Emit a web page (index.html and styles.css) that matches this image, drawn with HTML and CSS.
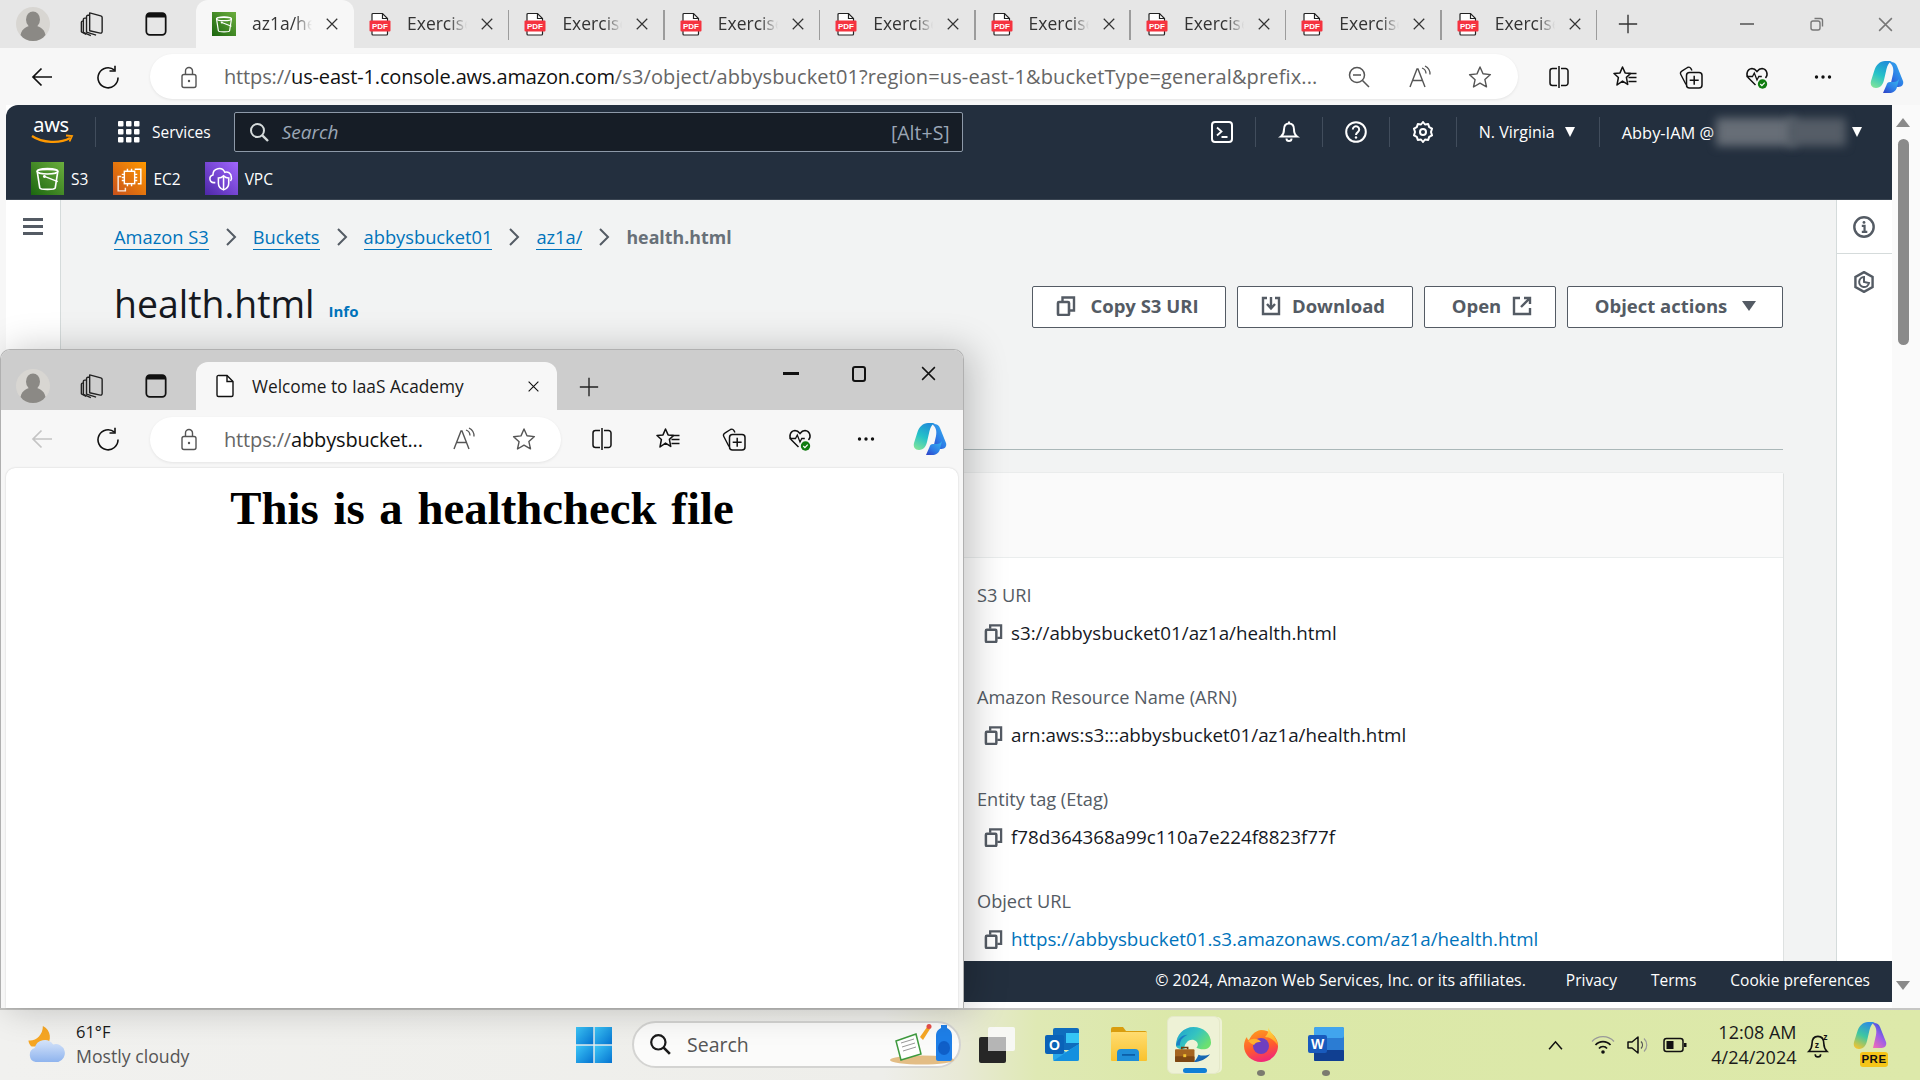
FILE: index.html
```html
<!DOCTYPE html>
<html lang="en">
<head>
<meta charset="utf-8">
<title>health.html</title>
<link rel="stylesheet" href="styles.css">
</head>
<body>
<svg class="defs" width="0" height="0" aria-hidden="true">
  <defs>
    <linearGradient id="gS3" x1="1" y1="0" x2="0" y2="1"><stop offset="0" stop-color="#6cae3e"/><stop offset="1" stop-color="#1b660f"/></linearGradient>
    <linearGradient id="gEc2" x1="1" y1="0" x2="0" y2="1"><stop offset="0" stop-color="#f90"/><stop offset="1" stop-color="#c8511b"/></linearGradient>
    <linearGradient id="gVpc" x1="1" y1="0" x2="0" y2="1"><stop offset="0" stop-color="#a166ff"/><stop offset="1" stop-color="#4d27a8"/></linearGradient>
    <linearGradient id="gCoA" x1="0.6" y1="0" x2="0.2" y2="1"><stop offset="0" stop-color="#1f8fd8"/><stop offset=".5" stop-color="#25c2c8"/><stop offset="1" stop-color="#7fe39a"/></linearGradient>
    <linearGradient id="gCoB" x1="0.9" y1="0" x2="0.1" y2="1"><stop offset="0" stop-color="#34b6ee"/><stop offset=".6" stop-color="#2d7be6"/><stop offset="1" stop-color="#2f45c8"/></linearGradient>
    <linearGradient id="gCoC" x1="0.6" y1="0" x2="0.2" y2="1"><stop offset="0" stop-color="#2c8fe0"/><stop offset=".5" stop-color="#3fc8a0"/><stop offset="1" stop-color="#f4c430"/></linearGradient>
    <linearGradient id="gCoD" x1="0.8" y1="0" x2="0.2" y2="1"><stop offset="0" stop-color="#1a55d8"/><stop offset=".5" stop-color="#9a5de8"/><stop offset="1" stop-color="#ee6cb8"/></linearGradient>
    <linearGradient id="gEdge" x1="0" y1="0" x2="1" y2=".6"><stop offset="0" stop-color="#1e9fd0"/><stop offset=".55" stop-color="#35c4c0"/><stop offset="1" stop-color="#6ce070"/></linearGradient>
    <linearGradient id="gEdgeB" x1="0" y1="0" x2="1" y2="1"><stop offset="0" stop-color="#1f7fc8"/><stop offset="1" stop-color="#0c4f9c"/></linearGradient>
    <linearGradient id="gFox" x1=".3" y1="0" x2=".6" y2="1"><stop offset="0" stop-color="#ff9a1f"/><stop offset=".55" stop-color="#ff5a2e"/><stop offset="1" stop-color="#f0247f"/></linearGradient>
    <linearGradient id="gFoxT" x1="0" y1="0" x2="0" y2="1"><stop offset="0" stop-color="#ffe04a"/><stop offset="1" stop-color="#ff9a1f"/></linearGradient>
    <linearGradient id="gWin" x1="0" y1="0" x2="1" y2="1"><stop offset="0" stop-color="#3cc6f7"/><stop offset="1" stop-color="#0573d0"/></linearGradient>
    <linearGradient id="gCloud" x1="0" y1="0" x2="0" y2="1"><stop offset="0" stop-color="#d6e4fa"/><stop offset="1" stop-color="#8fb4ee"/></linearGradient>
    <linearGradient id="gFold" x1="0" y1="0" x2="0" y2="1"><stop offset="0" stop-color="#ffdc70"/><stop offset="1" stop-color="#f9c22e"/></linearGradient>

    <symbol id="i-avatar" viewBox="0 0 34 34"><circle cx="17" cy="17" r="17" fill="#d8d6d2"/><ellipse cx="17" cy="12.500" rx="7" ry="8" fill="#8b8985"/><path d="M4.500 28c1.500-7 7-9.500 12.500-9.500S28 21 29.500 28c-3 4-7.500 6-12.500 6S7.500 32 4.500 28z" fill="#8b8985"/></symbol>
    <symbol id="i-spaces" viewBox="0 0 24 24"><g fill="none" stroke="#222" stroke-width="1.200" stroke-linejoin="round"><path d="M10 2.500l9.500 2.500c.8.200 1.200.8 1.200 1.500v12c0 1-.8 1.500-1.700 1.300L10 17.800V2.500z"/><path d="M10 4.500H8.500c-.8 0-1.200.5-1.200 1.200v13.300L15.500 21.500"/><path d="M7.300 7H5.800c-.8 0-1.200.5-1.200 1.200v11L11 22"/><path d="M4.600 9.500H3.800c-.6 0-.9.400-.9 1v8.200L7 21"/></g></symbol>
    <symbol id="i-vtabs" viewBox="0 0 24 24"><rect x="3.700" y="2.700" width="16.600" height="18.600" rx="3" fill="none" stroke="#111" stroke-width="1.500"/><path d="M4 6.500V5a2.500 2.500 0 0 1 2.500-2.500h11A2.500 2.500 0 0 1 20 5v1.500z" fill="#111"/></symbol>
    <symbol id="i-x" viewBox="0 0 16 16"><path d="M2 2l12 12M14 2L2 14" fill="none" stroke="currentColor" stroke-width="1.400"/></symbol>
    <symbol id="i-plus" viewBox="0 0 24 24"><path d="M12 2v20M2 12h20" fill="none" stroke="currentColor" stroke-width="1.500"/></symbol>
    <symbol id="i-pdf" viewBox="0 0 24 24"><path d="M5 1.500h9.500l5 5V22a1 1 0 0 1-1 1H5a1 1 0 0 1-1-1V2.500a1 1 0 0 1 1-1z" fill="#fff" stroke="#222" stroke-width="1.200"/><path d="M14.500 1.500V6.500h5" fill="none" stroke="#222" stroke-width="1.200"/><rect x="1.500" y="8.500" width="21" height="11" rx="1" fill="#f5333f"/><text x="12" y="17" font-family="Liberation Sans,sans-serif" font-size="8" font-weight="700" fill="#fff" text-anchor="middle">PDF</text></symbol>
    <symbol id="i-doc" viewBox="0 0 24 24"><path d="M6 1.500h8l6 6V21a1.500 1.500 0 0 1-1.500 1.500h-13A1.500 1.500 0 0 1 4 21V3a1.500 1.500 0 0 1 2-1.500z" fill="#fff" stroke="#111" stroke-width="1.400"/><path d="M14 1.500V7.500h6" fill="none" stroke="#111" stroke-width="1.400"/></symbol>
    <symbol id="i-bucket" viewBox="0 0 32 32"><path d="M6 9c0-2.500 20-2.500 20 0l-2.500 16c-.3 2-14.700 2-15 0z" fill="none" stroke="#fff" stroke-width="1.600"/><ellipse cx="16" cy="9" rx="10" ry="2.600" fill="none" stroke="#fff" stroke-width="1.600"/><path d="M13 14l13 5" stroke="#fff" stroke-width="1.400" fill="none"/><circle cx="13" cy="14" r="1.400" fill="#fff"/></symbol>
    <symbol id="i-s3" viewBox="0 0 32 32"><rect width="32" height="32" fill="url(#gS3)"/><use href="#i-bucket"/></symbol>
    <symbol id="i-ec2" viewBox="0 0 32 32"><rect width="32" height="32" fill="url(#gEc2)"/><g fill="none" stroke="#fff" stroke-width="1.400"><path d="M21 7h6v14h-3"/><path d="M12 25v3H5V14h3" opacity=".85"/><rect x="11" y="9" width="10" height="12"/><path d="M14 6.500V9M18 6.500V9M14 21v2.500M18 21v2.500M8.500 12H11M8.500 15H11M8.500 18H11M21 12h2.500M21 15h2.500M21 18h2.500"/></g></symbol>
    <symbol id="i-vpc" viewBox="0 0 32 32"><rect width="32" height="32" fill="url(#gVpc)"/><g fill="none" stroke="#fff" stroke-width="1.500"><path d="M10 20H8.500a3.800 3.800 0 0 1-.8-7.500 6 6 0 0 1 11.500-2.500 4.800 4.800 0 0 1 6.300 4.500 4 4 0 0 1-.8 4"/><path d="M13 15.500c2 0 4-1 5-2 1 1 3 2 5 2v5c0 3-2.500 5.500-5 6.500-2.500-1-5-3.500-5-6.500z"/><path d="M18 13.500v13"/></g></symbol>
    <symbol id="i-back" viewBox="0 0 24 24"><path d="M22 12H3M11.500 3.500L3 12l8.500 8.500" fill="none" stroke="currentColor" stroke-width="1.700"/></symbol>
    <symbol id="i-reload" viewBox="0 0 24 24"><path d="M18.500 5.200A10 10 0 1 0 22 12.500" fill="none" stroke="currentColor" stroke-width="1.600"/><path d="M19 .8v5.200h-5.500" fill="none" stroke="currentColor" stroke-width="1.600"/></symbol>
    <symbol id="i-lock" viewBox="0 0 24 24"><rect x="5" y="9.500" width="14" height="13" rx="2" fill="none" stroke="#555" stroke-width="1.400"/><path d="M8.500 9.500V6a3.500 3.500 0 0 1 7 0v3.500" fill="none" stroke="#555" stroke-width="1.400"/><circle cx="12" cy="16" r="1.200" fill="#555"/></symbol>
    <symbol id="i-zoomout" viewBox="0 0 24 24"><circle cx="10" cy="10" r="7.500" fill="none" stroke="#555" stroke-width="1.500"/><path d="M15.500 15.500L22 22M6 10h8" fill="none" stroke="#555" stroke-width="1.500"/></symbol>
    <symbol id="i-read" viewBox="0 0 24 24"><path d="M2 22L9 4h1l7 18M5 15.500h9.500" fill="none" stroke="#555" stroke-width="1.400"/><path d="M14 3a6 6 0 0 1 4 5.500M17 1a9 9 0 0 1 5 8.500" fill="none" stroke="#555" stroke-width="1.300"/></symbol>
    <symbol id="i-star" viewBox="0 0 24 24"><path d="M12 2l3 6.800 7.400.8-5.500 5 1.600 7.300L12 18.200 5.500 22l1.600-7.300-5.500-5 7.400-.8z" fill="none" stroke="#555" stroke-width="1.400" stroke-linejoin="round"/></symbol>
    <symbol id="i-split" viewBox="0 0 24 24"><path d="M10 3.500H5.500A2.500 2.500 0 0 0 3 6v12a2.500 2.500 0 0 0 2.500 2.500H10M14 3.500h4.500A2.500 2.500 0 0 1 21 6v12a2.500 2.500 0 0 1-2.500 2.500H14" fill="none" stroke="#111" stroke-width="1.500"/><path d="M12 1v22" stroke="#111" stroke-width="1.500"/></symbol>
    <symbol id="i-fav" viewBox="0 0 24 24"><path d="M9.500 2l2.600 5.900 5.500.6-4.200 3.900 1.300 7-5.200-3.300L4 20l1.400-7.500L1 8.500l6-.6z" fill="none" stroke="#111" stroke-width="1.500" stroke-linejoin="round"/><path d="M15.500 8.500h8M15.500 12.500h8M15.500 16.500h8" stroke="#111" stroke-width="1.300"/></symbol>
    <symbol id="i-coll" viewBox="0 0 24 24"><path d="M7 19.500L1.800 9.500c-.6-1.200-.2-2.600 1-3.300L8.500 2.500c1.200-.6 2.600-.3 3.300.8l1.200 2.200" fill="none" stroke="#111" stroke-width="1.400" stroke-linejoin="round"/><rect x="7.500" y="7.500" width="15.500" height="15.500" rx="3" fill="#f7f7f7" stroke="#111" stroke-width="1.500"/><path d="M15.200 10.800v9M10.700 15.300h9" stroke="#111" stroke-width="1.500"/></symbol>
    <symbol id="i-heart" viewBox="0 0 24 24"><path d="M10.500 20L3.500 13C.5 10 2 4 7 3.500c2 0 3.500 1 5 3 1.500-2 3-3 5-3 5 .5 6.500 6.500 3.500 9.500" fill="none" stroke="#111" stroke-width="1.500"/><path d="M1.500 11.500h6l1.800-3.500 2.700 7 1.800-3.500h3" fill="none" stroke="#111" stroke-width="1.300"/><circle cx="17.500" cy="19" r="4.700" fill="#107c10"/><path d="M15.300 19l1.600 1.600 2.800-3" fill="none" stroke="#fff" stroke-width="1.200"/></symbol>
    <symbol id="i-dots" viewBox="0 0 24 24"><circle cx="5.500" cy="12" r="1.700" fill="#111"/><circle cx="12" cy="12" r="1.700" fill="#111"/><circle cx="18.500" cy="12" r="1.700" fill="#111"/></symbol>
    <symbol id="i-copilot" viewBox="0 0 36 36"><path d="M22 3c3 0 5 1.500 6 4l6 15c1 3-1 6-4.500 6H21l3-13c1-5 0-9-4-12z" fill="url(#gCoB)"/><path d="M16 2h7c-3 1-4.500 4-5.500 8l-2.500 11c-1 4-3 8-8 8-4 0-6-3-5-7l3.500-11C7 6 11 2 16 2z" fill="url(#gCoA)"/><path d="M14 34h6c4 0 7-2 8-6l2-8c-1 2-3 3-5 3h-4c-2 0-3 1-3.500 3z" fill="url(#gCoB)"/></symbol>
    <symbol id="i-aws" viewBox="0 0 44 30"><text x="21" y="15" font-family="Noto Sans,sans-serif" font-size="20" fill="#fff" text-anchor="middle" letter-spacing="-.4">aws</text><path d="M2 19c10 7 28 8 38 2" fill="none" stroke="#f90" stroke-width="2.200"/><path d="M36 18.500l6 .5-2.500 5.500" fill="none" stroke="#f90" stroke-width="1.800"/></symbol>
    <symbol id="i-grid" viewBox="0 0 22 22"><g fill="#fff"><rect x="0" y="0" width="5.500" height="5.500" rx="1"/><rect x="8" y="0" width="5.500" height="5.500" rx="1"/><rect x="16" y="0" width="5.500" height="5.500" rx="1"/><rect x="0" y="8" width="5.500" height="5.500" rx="1"/><rect x="8" y="8" width="5.500" height="5.500" rx="1"/><rect x="16" y="8" width="5.500" height="5.500" rx="1"/><rect x="0" y="16" width="5.500" height="5.500" rx="1"/><rect x="8" y="16" width="5.500" height="5.500" rx="1"/><rect x="16" y="16" width="5.500" height="5.500" rx="1"/></g></symbol>
    <symbol id="i-search" viewBox="0 0 20 20"><circle cx="8.500" cy="8.500" r="6.500" fill="none" stroke="currentColor" stroke-width="2"/><path d="M13.300 13.300L19 19" stroke="currentColor" stroke-width="2.400"/></symbol>
    <symbol id="i-term" viewBox="0 0 22 22"><rect x="1" y="1" width="20" height="20" rx="3" fill="none" stroke="#fff" stroke-width="2"/><path d="M6 6.500l4.500 4-4.500 4M10.500 16h6" fill="none" stroke="#fff" stroke-width="1.800"/></symbol>
    <symbol id="i-bell" viewBox="0 0 22 22"><path d="M11 2.500c-3.500 0-5 2.500-5 6 0 3-1 5.500-3 7h16c-2-1.500-3-4-3-7 0-3.500-1.500-6-5-6z" fill="none" stroke="#fff" stroke-width="2"/><path d="M11 .5v2M8.500 17.500a2.500 2.500 0 0 0 5 0" fill="none" stroke="#fff" stroke-width="2"/></symbol>
    <symbol id="i-help" viewBox="0 0 22 22"><circle cx="11" cy="11" r="9.800" fill="none" stroke="#fff" stroke-width="2"/><path d="M7.800 8.500a3.200 3.200 0 1 1 5 2.600c-1.200.8-1.800 1.300-1.800 2.900" fill="none" stroke="#fff" stroke-width="2"/><circle cx="11" cy="16.500" r="1.200" fill="#fff"/></symbol>
    <symbol id="i-gear" viewBox="0 0 22 22"><path d="M11 1l2 2.500 3.200-.4 1 3 2.800 1.500L19 11l1 3.400-2.800 1.500-1 3-3.200-.4L11 21l-2-2.500-3.200.4-1-3L2 14.400 3 11 2 7.600l2.800-1.500 1-3 3.200.4z" fill="none" stroke="#fff" stroke-width="2" stroke-linejoin="round"/><circle cx="11" cy="11" r="3" fill="none" stroke="#fff" stroke-width="2"/></symbol>
    <symbol id="i-copy" viewBox="0 0 20 20"><rect x="2" y="6" width="11" height="13" rx="1" fill="none" stroke="currentColor" stroke-width="2.600"/><path d="M6.500 5V1.500H18V14.500H14" fill="none" stroke="currentColor" stroke-width="2.400"/></symbol>
    <symbol id="i-down" viewBox="0 0 20 20"><path d="M6 2H2v16h16V2h-4" fill="none" stroke="currentColor" stroke-width="2.400"/><path d="M10 1v11M6 8l4 4.500L14 8" fill="none" stroke="currentColor" stroke-width="2.400"/></symbol>
    <symbol id="i-ext" viewBox="0 0 20 20"><path d="M8 2H2v16h16v-6" fill="none" stroke="currentColor" stroke-width="2.400"/><path d="M12 2h6v6M18 2L9 11" fill="none" stroke="currentColor" stroke-width="2.400"/></symbol>
    <symbol id="i-info" viewBox="0 0 20 20"><circle cx="10" cy="10" r="8.800" fill="none" stroke="#545b64" stroke-width="2.200"/><path d="M8 9h2.500v5M8 14.500h5" fill="none" stroke="#545b64" stroke-width="2"/><circle cx="10" cy="5.800" r="1.300" fill="#545b64"/></symbol>
    <symbol id="i-hex" viewBox="0 0 20 20"><path d="M10 1l7.800 4.500v9L10 19l-7.800-4.500v-9z" fill="none" stroke="#545b64" stroke-width="2.200"/><path d="M10 5.500A4.500 4.500 0 1 0 14.500 11L10 10z" fill="none" stroke="#545b64" stroke-width="1.800"/></symbol>
    <symbol id="i-edgebag" viewBox="0 0 38 38"><path d="M1 20C1 9 9 1 19 1c10 0 18 7 18 16 0 5-4 7-8 7-3 0-6-1-7-2 2-1 2-4 0-6-3-3-8-2-10 1-2 2-3 5-2 7-4 0-9-1-9-4z" fill="url(#gEdge)"/><path d="M19 37c7 0 13-3 17-8-3 1.500-8 2-12 .5-1 3-3 6-5 7.500z" fill="url(#gEdgeB)"/><path d="M1 20c1-6 6-11 12-11-6 3-8 6-8 11z" fill="#1a7fc4"/><rect x="0" y="24" width="20" height="13" rx="1" fill="#a5651f"/><rect x="0" y="31" width="20" height="6" rx="1" fill="#7d4713"/><path d="M7 24v-2h6v2" fill="none" stroke="#6d3d10" stroke-width="1.600"/><rect x="8.500" y="29" width="3" height="3" fill="#f4c430"/></symbol>
  </defs>
</svg>

<div class="desktop">
  <div class="main-window">
    <div class="tabstrip">
      <svg class="avatar"><use href="#i-avatar"/></svg>
      <svg class="ic ic-spaces"><use href="#i-spaces"/></svg>
      <svg class="ic ic-vtabs"><use href="#i-vtabs"/></svg>
      <div class="tab tab-active">
        <svg class="tab-ic"><use href="#i-s3"/></svg>
        <span class="tab-title">az1a/health</span>
        <svg class="tab-x"><use href="#i-x"/></svg>
      </div>
      <div class="tab"><svg class="tab-ic"><use href="#i-pdf"/></svg><span class="tab-title">Exercise</span><svg class="tab-x"><use href="#i-x"/></svg></div>
      <div class="tab"><svg class="tab-ic"><use href="#i-pdf"/></svg><span class="tab-title">Exercise</span><svg class="tab-x"><use href="#i-x"/></svg></div>
      <div class="tab"><svg class="tab-ic"><use href="#i-pdf"/></svg><span class="tab-title">Exercise</span><svg class="tab-x"><use href="#i-x"/></svg></div>
      <div class="tab"><svg class="tab-ic"><use href="#i-pdf"/></svg><span class="tab-title">Exercise</span><svg class="tab-x"><use href="#i-x"/></svg></div>
      <div class="tab"><svg class="tab-ic"><use href="#i-pdf"/></svg><span class="tab-title">Exercise</span><svg class="tab-x"><use href="#i-x"/></svg></div>
      <div class="tab"><svg class="tab-ic"><use href="#i-pdf"/></svg><span class="tab-title">Exercise</span><svg class="tab-x"><use href="#i-x"/></svg></div>
      <div class="tab"><svg class="tab-ic"><use href="#i-pdf"/></svg><span class="tab-title">Exercise</span><svg class="tab-x"><use href="#i-x"/></svg></div>
      <div class="tab"><svg class="tab-ic"><use href="#i-pdf"/></svg><span class="tab-title">Exercise</span><svg class="tab-x"><use href="#i-x"/></svg></div>
      <svg class="newtab"><use href="#i-plus"/></svg>
      <div class="winctl winctl-dim">
        <span class="min-bar"></span>
        <svg class="restore" viewBox="0 0 16 16"><rect x="2" y="5" width="9" height="9" rx="2" fill="none" stroke="currentColor" stroke-width="1.400"/><path d="M5.500 2.500h6a2 2 0 0 1 2 2v6" fill="none" stroke="currentColor" stroke-width="1.400"/></svg>
        <svg class="close"><use href="#i-x"/></svg>
      </div>
    </div>

    <div class="toolbar">
      <svg class="tool tool-back"><use href="#i-back"/></svg>
      <svg class="tool tool-reload"><use href="#i-reload"/></svg>
      <div class="urlpill urlpill-main">
        <svg class="url-lock"><use href="#i-lock"/></svg>
        <span class="url"><span class="url-dim">https://</span>us-east-1.console.aws.amazon.com<span class="url-dim url-tail">/s3/object/abbysbucket01?region=us-east-1&amp;bucketType=general&amp;prefix...</span></span>
        <svg class="url-ic url-zoom"><use href="#i-zoomout"/></svg>
        <svg class="url-ic url-read"><use href="#i-read"/></svg>
        <svg class="url-ic url-star"><use href="#i-star"/></svg>
      </div>
      <div class="tool-set">
        <svg class="tool"><use href="#i-split"/></svg>
        <svg class="tool"><use href="#i-fav"/></svg>
        <svg class="tool"><use href="#i-coll"/></svg>
        <svg class="tool"><use href="#i-heart"/></svg>
        <svg class="tool"><use href="#i-dots"/></svg>
        <svg class="copilot"><use href="#i-copilot"/></svg>
      </div>
    </div>

    <div class="viewport">
      <div class="view">
        <header class="aws-head">
          <div class="aws-row1">
            <svg class="aws-logo"><use href="#i-aws"/></svg>
            <span class="aws-sep aws-sep-logo"></span>
            <svg class="aws-grid"><use href="#i-grid"/></svg>
            <span class="aws-services">Services</span>
            <div class="aws-search">
              <svg class="aws-search-ic"><use href="#i-search"/></svg>
              <span class="aws-search-ph">Search</span>
              <span class="aws-search-key">[Alt+S]</span>
            </div>
            <svg class="aws-act aws-act-first"><use href="#i-term"/></svg>
            <span class="aws-sep"></span>
            <svg class="aws-act"><use href="#i-bell"/></svg>
            <span class="aws-sep"></span>
            <svg class="aws-act"><use href="#i-help"/></svg>
            <span class="aws-sep"></span>
            <svg class="aws-act"><use href="#i-gear"/></svg>
            <span class="aws-sep"></span>
            <span class="aws-region">N. Virginia</span><span class="caret caret-w"></span>
            <span class="aws-sep aws-sep-user"></span>
            <span class="aws-user">Abby-IAM @</span><span class="blurred"><i class="blur-a"></i><i class="blur-b"></i></span><span class="caret caret-w caret-user"></span>
          </div>
          <div class="aws-row2">
            <svg class="svc-ic"><use href="#i-s3"/></svg><span class="svc-name">S3</span>
            <svg class="svc-ic svc-ic-ec2"><use href="#i-ec2"/></svg><span class="svc-name">EC2</span>
            <svg class="svc-ic svc-ic-vpc"><use href="#i-vpc"/></svg><span class="svc-name">VPC</span>
          </div>
        </header>

        <div class="aws-body">
          <aside class="sidenav"><span class="burger"><i></i><i></i><i></i></span></aside>
          <main class="content">
            <nav class="crumbs">
              <a class="crumb">Amazon S3</a><svg class="chev" viewBox="0 0 12 20"><path d="M2 2l8 8-8 8" fill="none" stroke="#545b64" stroke-width="2"/></svg>
              <a class="crumb">Buckets</a><svg class="chev" viewBox="0 0 12 20"><path d="M2 2l8 8-8 8" fill="none" stroke="#545b64" stroke-width="2"/></svg>
              <a class="crumb">abbysbucket01</a><svg class="chev" viewBox="0 0 12 20"><path d="M2 2l8 8-8 8" fill="none" stroke="#545b64" stroke-width="2"/></svg>
              <a class="crumb">az1a/</a><svg class="chev" viewBox="0 0 12 20"><path d="M2 2l8 8-8 8" fill="none" stroke="#545b64" stroke-width="2"/></svg>
              <span class="crumb-cur">health.html</span>
            </nav>
            <div class="title-row">
              <h1 class="obj-title">health.html</h1>
              <a class="info-link">Info</a>
              <div class="btns">
                <button class="btn btn-copy"><svg class="btn-ic"><use href="#i-copy"/></svg>Copy S3 URI</button>
                <button class="btn btn-dl"><svg class="btn-ic"><use href="#i-down"/></svg>Download</button>
                <button class="btn btn-open">Open<svg class="btn-ic btn-ic-end"><use href="#i-ext"/></svg></button>
                <button class="btn btn-act">Object actions<span class="caret caret-g"></span></button>
              </div>
            </div>
            <div class="tabline"></div>
            <section class="panel">
              <div class="panel-head"></div>
              <div class="panel-body">
                <div class="field"><div class="f-label">S3 URI</div><div class="f-val"><svg class="f-ic"><use href="#i-copy"/></svg>s3://abbysbucket01/az1a/health.html</div></div>
                <div class="field"><div class="f-label">Amazon Resource Name (ARN)</div><div class="f-val"><svg class="f-ic"><use href="#i-copy"/></svg>arn:aws:s3:::abbysbucket01/az1a/health.html</div></div>
                <div class="field"><div class="f-label">Entity tag (Etag)</div><div class="f-val"><svg class="f-ic"><use href="#i-copy"/></svg>f78d364368a99c110a7e224f8823f77f</div></div>
                <div class="field"><div class="f-label">Object URL</div><div class="f-val"><svg class="f-ic"><use href="#i-copy"/></svg><a class="f-link">https://abbysbucket01.s3.amazonaws.com/az1a/health.html</a></div></div>
              </div>
            </section>
          </main>
          <aside class="rail">
            <div class="rail-top"><svg class="rail-ic"><use href="#i-info"/></svg></div>
            <div class="rail-bot"><svg class="rail-ic"><use href="#i-hex"/></svg></div>
          </aside>
        </div>

        <footer class="aws-foot">
          <span class="foot-copy">© 2024, Amazon Web Services, Inc. or its affiliates.</span>
          <span class="foot-link foot-privacy">Privacy</span>
          <span class="foot-link foot-terms">Terms</span>
          <span class="foot-link foot-cookie">Cookie preferences</span>
        </footer>
        <div class="view-end"></div>
      </div>
      <div class="scrollbar">
        <span class="sb-up"></span>
        <span class="sb-thumb"></span>
        <span class="sb-down"></span>
      </div>
    </div>
  </div>

  <div class="taskbar">
    <div class="weather">
      <svg class="wx-ic" viewBox="0 0 36 35"><path d="M14 0C22 4 23 14 17 20H3C1 18 0 16 0 14 7 15 14 9 14 0z" fill="#f6a623"/><path d="M7 35A7 7 0 0 1 6 21.500 10 10 0 0 1 24 18 8.500 8.500 0 0 1 29 35z" fill="url(#gCloud)"/></svg>
      <div class="wx-txt"><span class="wx-temp">61°F</span><span class="wx-desc">Mostly cloudy</span></div>
    </div>
    <div class="task-center">
      <svg class="start" viewBox="0 0 36 36"><rect x="0" y="0" width="17.300" height="17.300" fill="url(#gWin)"/><rect x="18.700" y="0" width="17.300" height="17.300" fill="url(#gWin)"/><rect x="0" y="18.700" width="17.300" height="17.300" fill="url(#gWin)"/><rect x="18.700" y="18.700" width="17.300" height="17.300" fill="url(#gWin)"/></svg>
      <div class="tsearch">
        <svg class="tsearch-ic"><use href="#i-search"/></svg>
        <span class="tsearch-txt">Search</span>
        <svg class="tsearch-art" viewBox="0 0 66 42"><ellipse cx="32" cy="37" rx="32" ry="4.500" fill="#e3bd85"/><path d="M6 18l20-7 5 20-20 6z" fill="#fff" stroke="#3f9a3f" stroke-width="1.500"/><path d="M11 20l13-4M12 24l13-4M13 28l13-4" stroke="#999" stroke-width="1"/><path d="M30 14l7-10 3 2-7 11z" fill="#f6a623"/><circle cx="39" cy="3.500" r="2.500" fill="#e8504a"/><path d="M46 36V13c0-5 3-7 5-8V2h6v3c2 1 5 3 5 8v23c0 1-1 2-2 2H48c-1 0-2-1-2-2z" fill="#1e7fe8"/><ellipse cx="54" cy="25" rx="6" ry="7" fill="#0f5fc8"/></svg>
      </div>
      <svg class="app app-snap" viewBox="0 0 36 36"><rect x="0" y="10" width="27" height="26" rx="2" fill="#262626"/><rect x="9" y="0" width="27" height="24" rx="2" fill="#fafafa" opacity=".9"/><rect x="9" y="10" width="18" height="14" fill="#b5b5b5"/></svg>
      <svg class="app app-outlook" viewBox="0 0 36 36"><rect x="8" y="1" width="26" height="22" rx="2" fill="#0f6cbd"/><rect x="21" y="6" width="13" height="10" fill="#35c4f5"/><path d="M8 17l13 8 13-8v15a2 2 0 0 1-2 2H10a2 2 0 0 1-2-2z" fill="#28a8ea"/><path d="M8 34l26-17v15a2 2 0 0 1-2 2z" fill="#1490df"/><rect x="0" y="8" width="19" height="19" rx="2" fill="#0a62b8"/><text x="9.500" y="23" font-family="Liberation Sans,sans-serif" font-size="14" font-weight="700" fill="#fff" text-anchor="middle">O</text></svg>
      <svg class="app app-files" viewBox="0 0 36 36"><path d="M0 2a2 2 0 0 1 2-2h10l3 4h19a2 2 0 0 1 2 2v6H0z" fill="#d99d0e"/><rect x="0" y="5" width="36" height="29" rx="1" fill="url(#gFold)"/><path d="M6 34V26a4 4 0 0 1 4-4h14a4 4 0 0 1 4 4v8z" fill="#1f8ed8"/><rect x="11" y="27" width="13" height="1.800" fill="#0c5fa8"/></svg>
      <div class="app-edge"><svg class="app-edge-ic"><use href="#i-edgebag"/></svg><span class="app-bar"></span></div>
      <div class="app-wrap app-fox"><svg class="app" viewBox="0 0 36 36"><path d="M18 3c9 0 17 7 17 16s-8 16-17 16S1 28 1 19c0-3 1-7 3-9 0 2 1 3 2 3 2-4 5-9 12-10z" fill="url(#gFox)"/><path d="M25 0c1 5 9 9 10 19-3-6-9-9-13-9 3-3 4-6 3-10z" fill="url(#gFoxT)"/><circle cx="18" cy="19" r="8" fill="#6f3fc0"/><path d="M5 14c4-3 10-3 13 1-3-.5-6 .5-7 3-2-1-4-2-6-4z" fill="#ffb02e"/></svg><span class="app-dot"></span></div>
      <div class="app-wrap app-word"><svg class="app" viewBox="0 0 36 36"><rect x="6" y="0" width="30" height="34" rx="2" fill="#2b7cd3"/><rect x="6" y="0" width="30" height="11" rx="2" fill="#41a5ee"/><rect x="6" y="11" width="30" height="12" fill="#2b7cd3"/><rect x="6" y="23" width="30" height="11" rx="1" fill="#103f91"/><rect x="0" y="8" width="19" height="18" rx="2" fill="#185abd"/><text x="9.500" y="22" font-family="Liberation Sans,sans-serif" font-size="14" font-weight="700" fill="#fff" text-anchor="middle">W</text></svg><span class="app-dot"></span></div>
    </div>
    <div class="tray">
      <svg class="tray-chev" viewBox="0 0 18 12"><path d="M2 10l7-8 7 8" fill="none" stroke="#111" stroke-width="1.700"/></svg>
      <svg class="tray-ic tray-wifi" viewBox="0 0 24 24"><path d="M1 8.500a15 15 0 0 1 22 0" fill="none" stroke="#999" stroke-width="1.200"/><path d="M4.500 12a10 10 0 0 1 15 0M8 15.500a5 5 0 0 1 8 0" fill="none" stroke="#111" stroke-width="1.700"/><circle cx="12" cy="19" r="1.800" fill="#111"/></svg>
      <svg class="tray-ic tray-vol" viewBox="0 0 24 24"><path d="M2 9h4l6-5v16l-6-5H2z" fill="none" stroke="#111" stroke-width="1.500" stroke-linejoin="round"/><path d="M15 8.500a5 5 0 0 1 0 7" fill="none" stroke="#555" stroke-width="1.300"/><path d="M18 5.500a9 9 0 0 1 0 13" fill="none" stroke="#999" stroke-width="1.200"/></svg>
      <svg class="tray-ic" viewBox="0 0 24 24"><rect x="1" y="5.500" width="19" height="13" rx="2.500" fill="none" stroke="#111" stroke-width="1.500"/><rect x="3.500" y="8" width="7" height="8" fill="#111"/><rect x="21" y="10" width="2.500" height="4" fill="#111"/></svg>
      <div class="clock"><span>12:08 AM</span><span>4/24/2024</span></div>
      <svg class="tray-bell" viewBox="0 0 24 24"><path d="M11 4c-4 0-5.500 3-5.500 7 0 3-1 5-3 7h17c-2-2-3-4-3-7 0-4-1.500-7-5.500-7z" fill="none" stroke="#111" stroke-width="1.500"/><path d="M8.500 20.500a2.500 2.500 0 0 0 5 0" fill="none" stroke="#111" stroke-width="1.500"/><text x="8" y="15" font-family="Liberation Sans,sans-serif" font-size="8" font-weight="700" fill="#111">z</text><text x="16" y="7" font-family="Liberation Sans,sans-serif" font-size="8" font-weight="700" fill="#111">z</text></svg>
      <div class="tray-copilot">
        <svg class="tray-copilot-ic" viewBox="0 0 36 36"><path d="M22 1c3 0 5 1.500 6 4l6 15c1 3-1 6-4.500 6H21l3-13c1-5 0-9-4-12z" fill="url(#gCoD)"/><path d="M16 0h7c-3 1-4.500 4-5.500 8l-2.500 11c-1 4-3 8-8 8-4 0-6-3-5-7l3.500-11C7 4 11 0 16 0z" fill="url(#gCoC)"/></svg>
        <span class="pre">PRE</span>
      </div>
    </div>
  </div>

  <div class="popup">
    <div class="pop-strip">
      <svg class="avatar"><use href="#i-avatar"/></svg>
      <svg class="ic ic-spaces"><use href="#i-spaces"/></svg>
      <svg class="ic ic-vtabs"><use href="#i-vtabs"/></svg>
      <div class="pop-tab">
        <svg class="pop-tab-ic"><use href="#i-doc"/></svg>
        <span class="pop-tab-title">Welcome to IaaS Academy</span>
        <svg class="pop-tab-x"><use href="#i-x"/></svg>
      </div>
      <svg class="newtab newtab-pop"><use href="#i-plus"/></svg>
      <div class="winctl winctl-pop">
        <span class="min-bar"></span>
        <span class="max-box"></span>
        <svg class="close"><use href="#i-x"/></svg>
      </div>
    </div>
    <div class="toolbar toolbar-pop">
      <svg class="tool tool-back tool-disabled"><use href="#i-back"/></svg>
      <svg class="tool tool-reload"><use href="#i-reload"/></svg>
      <div class="urlpill urlpill-pop">
        <svg class="url-lock"><use href="#i-lock"/></svg>
        <span class="url"><span class="url-dim">https://</span>abbysbucket...</span>
        <svg class="url-ic url-read url-read-pop"><use href="#i-read"/></svg>
        <svg class="url-ic url-star"><use href="#i-star"/></svg>
      </div>
      <div class="tool-set tool-set-pop">
        <svg class="tool"><use href="#i-split"/></svg>
        <svg class="tool"><use href="#i-fav"/></svg>
        <svg class="tool"><use href="#i-coll"/></svg>
        <svg class="tool"><use href="#i-heart"/></svg>
        <svg class="tool"><use href="#i-dots"/></svg>
        <svg class="copilot"><use href="#i-copilot"/></svg>
      </div>
    </div>
    <div class="pop-page"><h1 class="health">This is a healthcheck file</h1></div>
  </div>
</div>
</body>
</html>
```
FILE: styles.css
```css
* { box-sizing: border-box; }
html, body { margin: 0; padding: 0; width: 1920px; height: 1080px; overflow: hidden; }
body { font-family: "Open Sans", "Noto Sans", sans-serif; color: #16191f; }
svg { display: block; flex: none; }
.defs { position: absolute; }
.desktop { position: relative; width: 1920px; height: 1080px; display: flex; flex-direction: column; background: #f7f7f7; }

/* ---------- main browser ---------- */
.main-window { height: 1008px; display: flex; flex-direction: column; background: #f7f7f7; }
.tabstrip { height: 48px; flex: none; display: flex; align-items: center; background: #e6e6e6; padding-left: 16px; }
.avatar { width: 34px; height: 34px; }
.ic { width: 28px; height: 28px; }
.ic-spaces { margin-left: 28px; }
.ic-vtabs { margin-left: 36px; }
.tab { width: 155.400px; height: 48px; display: flex; align-items: center; padding-left: 14px; position: relative; }
.tab::after { content: ""; position: absolute; right: 0; top: 10px; height: 30px; width: 1.500px; background: #9c9c9c; }
.tab-ic { width: 24px; height: 26px; }
.tab-title { margin: -2px 0 0 15px; width: 60px; overflow: hidden; white-space: nowrap; font-size: 17.500px; color: #333; -webkit-mask-image: linear-gradient(90deg, #000 70%, transparent); mask-image: linear-gradient(90deg, #000 70%, transparent); }
.tab-x { width: 14px; height: 14px; margin-left: 13px; color: #333; }
.tab-active { width: 158px; margin-left: 26px; background: #f7f7f7; border-radius: 12px 12px 0 0; padding-left: 16px; }
.tab-active::after { display: none; }
.tab-active .tab-ic { width: 24px; height: 28px; }
.tab-active .tab-title { width: 60px; margin-left: 16px; }
.tab-active .tab-x { margin-left: 13px; }
.newtab { width: 22px; height: 22px; margin-left: 20px; color: #333; }
.winctl { margin-left: auto; display: flex; align-items: center; padding-right: 26px; }
.winctl-dim { color: #777; }
.min-bar { width: 14px; height: 2px; background: currentColor; }
.restore { width: 16px; height: 16px; margin-left: 55px; }
.close { width: 17px; height: 17px; margin-left: 52px; }

.toolbar { height: 57px; flex: none; display: flex; align-items: center; padding-left: 30px; background: #f7f7f7; }
.tool { width: 24px; height: 24px; color: #111; }
.tool-reload { margin-left: 42px; }
.tool-disabled { color: #c4c4c4; }
.urlpill { height: 45px; display: flex; align-items: center; background: #fff; border-radius: 23px; box-shadow: 0 1px 3px rgba(0,0,0,.08); flex: none; }
.urlpill-main { width: 1368px; margin-left: 30px; padding: 0 26px 0 27px; }
.url-lock { width: 24px; height: 24px; }
.url { margin-left: 23px; font-size: 20px; letter-spacing: -.15px; white-space: nowrap; color: #111; }
.url-dim { color: #666; }
.url-tail { letter-spacing: .13px; }
.url-ic { width: 24px; height: 24px; }
.url-zoom { margin-left: auto; }
.url-read { margin-left: 37px; }
.url-star { margin-left: 36px; }
.tool-set { display: flex; align-items: center; gap: 42px; margin-left: 29px; }
.tool-set .tool { width: 24px; height: 24px; }
.copilot { width: 36px; height: 36px; margin-left: -8px; }

/* ---------- viewport ---------- */
.viewport { flex: 1; display: flex; padding-left: 6px; min-height: 0; }
.view { width: 1886px; display: flex; flex-direction: column; background: #fff; }
.aws-head { background: #232f3e; height: 95px; flex: none; border-radius: 12px 0 0 0; color: #fff; border-bottom: 1px solid #3a4552; }
.aws-row1 { height: 54px; display: flex; align-items: center; padding-left: 24px; }
.aws-logo { width: 44px; height: 30px; }
.aws-sep { width: 1px; height: 30px; background: #414d5c; flex: none; }
.aws-sep-logo { margin-left: 21px; }
.aws-grid { width: 22px; height: 22px; margin-left: 22px; }
.aws-services { margin-left: 12px; font-size: 15.500px; }
.aws-search { width: 729px; height: 40px; margin-left: 23px; background: #161d26; border: 1px solid #8d99a8; border-radius: 2px; display: flex; align-items: center; padding: 0 12px 0 14px; }
.aws-search-ic { width: 20px; height: 20px; color: #d5dbdb; }
.aws-search-ph { margin-left: 13px; font-style: italic; font-size: 19px; color: #9ba7b6; }
.aws-search-key { margin-left: auto; font-size: 19.500px; color: #9ba7b6; }
.aws-act { width: 22px; height: 22px; margin: 0 22px; }
.aws-act-first { margin-left: 248px; }
.aws-region { margin-left: 22px; font-size: 16px; }
.caret { display: inline-block; width: 0; height: 0; border-left: 5.500px solid transparent; border-right: 5.500px solid transparent; border-top: 10px solid #fff; flex: none; }
.caret-w { margin-left: 10px; }
.aws-sep-user { margin-left: 24px; }
.aws-user { margin-left: 22px; font-size: 16.400px; }
.blurred { position: relative; width: 136px; height: 28px; flex: none; }
.blurred i { position: absolute; top: 0; height: 28px; background: #676e77; filter: blur(5px); }
.blur-a { left: 2px; width: 80px; }
.blur-b { left: 74px; width: 58px; background: #555d67 !important; }
.caret-user { margin-left: 2px; }
.aws-row2 { height: 39px; display: flex; align-items: center; padding-left: 25px; }
.svc-ic { width: 33px; height: 33px; }
.svc-name { margin-left: 7px; font-size: 15.500px; }
.svc-ic-ec2 { margin-left: 25px; }
.svc-ic-vpc { margin-left: 24px; }

.aws-body { flex: 1; display: flex; min-height: 0; background: #f2f3f3; overflow: hidden; }
.sidenav { width: 55px; flex: none; background: #fff; border-right: 1px solid #d5dbdb; padding: 18px 0 0 17px; }
.burger { display: flex; flex-direction: column; gap: 4px; width: 20px; }
.burger i { display: block; height: 3px; background: #545b64; }
.content { flex: 1; min-width: 0; padding: 25px 53px 0; }
.crumbs { height: 24px; display: flex; align-items: center; font-size: 18.300px; }
.crumb { color: #0073bb; border-bottom: 1px solid #0073bb; line-height: 24px; }
.chev { width: 12px; height: 20px; margin: 0 16px 0 16px; }
.crumb-cur { color: #687078; font-weight: 700; font-size: 17.800px; }
.title-row { margin-top: 37px; height: 42px; display: flex; align-items: center; }
.obj-title { margin: -6px 0 0; font-size: 37.400px; font-weight: 400; color: #16191f; line-height: 42px; }
.info-link { margin: 8px 0 0 14px; font-size: 15px; font-weight: 700; color: #0073bb; }
.btns { margin-left: auto; display: flex; gap: 11px; }
.btn { height: 42px; display: flex; align-items: center; justify-content: center; background: #fff; border: 1px solid #545b64; border-radius: 2px; font: 700 18.500px "Open Sans", sans-serif; color: #545b64; padding: 0 0 3px; }
.btn-copy { width: 194px; padding-right: 3px; }
.btn-dl { width: 176px; padding-right: 4px; }
.btn-open { width: 132px; padding-left: 4px; }
.btn-act { width: 216px; padding-left: 1px; }
.btn-ic { width: 20px; height: 20px; margin-right: 11px; }
.btn-copy .btn-ic { margin-right: 14px; }
.btn-ic-end { margin: 0 0 0 11px; }
.caret-g { border-top-color: #545b64; margin-left: 15px; border-left-width: 7px; border-right-width: 7px; }
.tabline { margin-top: 121px; height: 1px; background: #aab7b8; }
.panel { margin-top: 23px; background: #fff; box-shadow: 0 1px 1px rgba(0,28,36,.3), 0 0 1px rgba(0,28,36,.2); }
.panel-head { height: 85px; background: #fafafa; border-bottom: 1px solid #eaeded; }
.panel-body { padding: 25px 0 120px 863px; display: flex; flex-direction: column; gap: 40px; }
.f-label { height: 24px; line-height: 24px; font-size: 18.200px; color: #545b64; }
.f-val { height: 24px; margin-top: 14px; display: flex; align-items: center; font-size: 18.800px; color: #16191f; padding-left: 7px; white-space: nowrap; }
.f-ic { width: 19px; height: 19px; margin-right: 8px; color: #545b64; }
.f-link { color: #0073bb; }
.rail { width: 56px; flex: none; background: #fff; border-left: 1px solid #d5dbdb; }
.rail-top { height: 54px; border-bottom: 1px solid #d5dbdb; padding: 16px 0 0 16px; }
.rail-bot { padding: 17px 0 0 16px; }
.rail-ic { width: 22px; height: 22px; }
.aws-foot { height: 41px; flex: none; background: #232f3e; display: flex; align-items: center; justify-content: flex-end; color: #fff; font-size: 15.500px; padding: 0 22px 3px 0; }
.foot-copy { font-size: 15.900px; }
.foot-privacy { margin-left: 40px; }
.foot-terms { margin-left: 34px; }
.foot-cookie { margin-left: 34px; }
.view-end { height: 6px; flex: none; background: #fff; }
.scrollbar { flex: 1; background: #fafafa; display: flex; flex-direction: column; align-items: center; padding: 13px 6px 0 0; }
.sb-up { width: 0; height: 0; border-left: 7px solid transparent; border-right: 7px solid transparent; border-bottom: 9px solid #8a8a8a; }
.sb-thumb { width: 11px; height: 206px; margin-top: 12px; background: #8a8a8a; border-radius: 6px; }
.sb-down { width: 0; height: 0; margin-top: auto; margin-bottom: 18px; border-left: 7px solid transparent; border-right: 7px solid transparent; border-top: 9px solid #8a8a8a; }

/* ---------- popup window (a window on the desktop) ---------- */
.popup { position: absolute; left: 0; top: 349px; width: 964px; height: 659px; display: flex; flex-direction: column; background: #f7f7f7; border-radius: 10px 10px 0 0; border: 1px solid #b0b0b0; border-bottom: 0; box-shadow: 8px 0 36px rgba(0,0,0,.22); }
.pop-strip { height: 60px; flex: none; display: flex; align-items: flex-end; background: #cdcdcd; padding-left: 15px; padding-bottom: 7px; border-radius: 9px 9px 0 0; position: relative; }
.pop-tab { width: 361px; height: 48px; margin-bottom: -7px; margin-left: 26px; background: #f7f7f7; border-radius: 12px 12px 0 0; display: flex; align-items: center; padding-left: 17px; }
.pop-strip .ic-spaces { margin-bottom: 3px; }
.pop-strip .ic-vtabs { margin-bottom: 3px; }
.pop-tab-ic { width: 24px; height: 26px; }
.pop-tab-title { margin-left: 15px; font-size: 17.300px; color: #1a1a1a; white-space: nowrap; }
.pop-tab-x { width: 13px; height: 13px; margin-left: auto; margin-right: 17px; color: #111; }
.newtab-pop { margin: 0 0 5px 21px; color: #222; }
.winctl-pop { position: absolute; right: 26px; top: 15px; color: #111; padding: 0; }
.winctl-pop .min-bar { width: 16px; height: 2.500px; }
.max-box { width: 14px; height: 16px; margin-left: 53px; border: 2px solid #111; border-radius: 3px; }
.winctl-pop .close { margin-left: 54px; }
.toolbar-pop { height: 58px; padding-left: 29px; }
.urlpill-pop { width: 411px; margin-left: 30px; padding: 0 25px 0 27px; }
.url-read-pop { margin-left: auto; }
.tool-set-pop { margin-left: 29px; }
.pop-page { flex: 1; margin: 0 5px; background: #fff; border-radius: 9px 9px 0 0; box-shadow: 0 0 2px rgba(0,0,0,.18); }
.health { margin: 0; padding-top: 14px; text-align: center; font: 700 46.800px/52px "Liberation Serif", serif; color: #000; word-spacing: 3px; }

/* ---------- taskbar ---------- */
.taskbar { height: 72px; flex: none; display: flex; align-items: center; border-top: 2px solid #c6c6c4; background: linear-gradient(90deg, #f1f1ef 0, #eeeeea 46%, #e8e9d6 50%, #dfe9b4 54%, #dbe8a8 62%, #dde9aa 100%); }
.weather { display: flex; align-items: center; margin: -2px 0 0 28px; width: 548px; }
.wx-ic { width: 38px; height: 36px; }
.wx-txt { margin-left: 10px; display: flex; flex-direction: column; line-height: 24px; }
.wx-temp { font-size: 16.500px; color: #1a1a1a; }
.wx-desc { font-size: 17.700px; color: #555; }
.task-center { display: flex; align-items: center; }
.start { width: 36px; height: 36px; }
.tsearch { width: 329px; height: 47px; margin: -2px 0 0 20px; display: flex; align-items: center; background: #fbfbfa; border: 2px solid #d4d4d2; border-radius: 24px; padding-left: 15px; }
.tsearch-ic { width: 22px; height: 22px; color: #1a1a1a; }
.tsearch-txt { margin-left: 16px; font-size: 19.500px; color: #555; }
.tsearch-art { width: 66px; height: 42px; margin-left: auto; margin-right: 3px; }
.app { width: 36px; height: 36px; }
.app-snap { margin-left: 18px; }
.app-outlook { margin-left: 30px; }
.app-files { margin-left: 30px; }
.app-edge { width: 53px; height: 58px; margin-left: 20px; background: #eef2d6; border: 1px solid #e5e9c9; border-radius: 6px; display: flex; flex-direction: column; align-items: center; padding-top: 9px; position: relative; box-shadow: 3px 0 0 -1px #eef2d6; }
.app-edge-ic { width: 37px; height: 37px; }
.app-bar { position: absolute; bottom: 0; left: 15px; width: 24px; height: 5px; border-radius: 3px; background: #0f7fd6; }
.app-wrap { position: relative; }
.app-fox { margin-left: 23px; }
.app-word { margin-left: 29px; }
.app-dot { position: absolute; left: 14px; top: 43px; width: 8px; height: 6px; border-radius: 50%; background: #7b7b6f; }
.tray { margin-left: auto; display: flex; align-items: center; }
.tray-chev { width: 17px; height: 11px; margin-right: 27.500px; }
.tray-ic { width: 24px; height: 24px; margin-right: 10px; }
.tray-wifi { margin-right: 11px; }
.tray-vol { margin-right: 13px; }
.clock { margin-left: 14px; display: flex; flex-direction: column; align-items: flex-end; font-size: 18px; line-height: 25px; color: #1a1a1a; }
.tray-bell { width: 26px; height: 26px; margin-left: 9.500px; }
.tray-copilot { position: relative; width: 38px; height: 46px; margin: 0 30px 0 20px; }
.tray-copilot-ic { width: 36px; height: 36px; }
.pre { position: absolute; left: 8px; top: 30px; width: 28px; height: 15px; background: #f5c518; border-radius: 3px; font: 700 11.500px/15px "Liberation Sans", sans-serif; color: #111; text-align: center; letter-spacing: .5px; }
```
